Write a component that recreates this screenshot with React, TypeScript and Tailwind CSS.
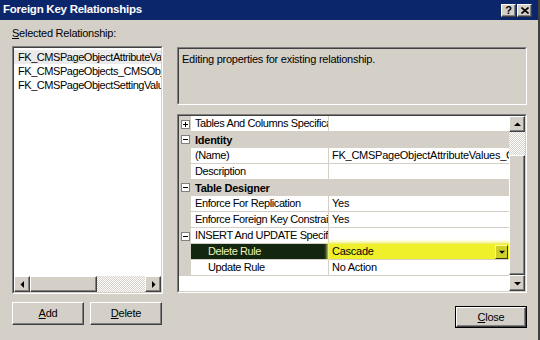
import React from "react";

const FONT = "font-['Liberation_Sans',Arial,sans-serif] text-[11px] tracking-[-0.25px]";

type Row = {
	name: string;
	value?: string;
	cat?: boolean;
	expand?: "+" | "-";
	indent?: boolean;
	selected?: boolean;
};

const ROWS: Row[] = [
	{ name: "Tables And Columns Specification", value: "", expand: "+" },
	{ name: "Identity", cat: true, expand: "-" },
	{ name: "(Name)", value: "FK_CMSPageObjectAttributeValues_CMSObjects" },
	{ name: "Description", value: "" },
	{ name: "Table Designer", cat: true, expand: "-" },
	{ name: "Enforce For Replication", value: "Yes" },
	{ name: "Enforce Foreign Key Constraint", value: "Yes" },
	{ name: "INSERT And UPDATE Specification", value: "", expand: "-" },
	{ name: "Delete Rule", value: "Cascade", indent: true, selected: true },
	{ name: "Update Rule", value: "No Action", indent: true },
];

const Arrow = ({ dir, size = 7 }: { dir: "up" | "down" | "left" | "right"; size?: number }) => {
	const pts = {
		up: "0,5 7,5 3.5,1.5",
		down: "0,2 7,2 3.5,5.5",
		left: "5,0 5,7 1.5,3.5",
		right: "2,0 2,7 5.5,3.5",
	}[dir];
	return (
		<svg width={size} height={size} viewBox="0 0 7 7">
			<polygon points={pts} fill="#000" />
		</svg>
	);
};

const Raised = ({ className = "", children }: { className?: string; children?: React.ReactNode }) => (
	<div
		className={`border border-t-white border-l-white border-r-[#404040] border-b-[#404040] bg-[#d4d0c8] shadow-[inset_-1px_-1px_0_#808080] flex items-center justify-center ${className}`}
	>
		{children}
	</div>
);

const Sunken = ({ className = "", inner = "", children }: { className?: string; inner?: string; children?: React.ReactNode }) => (
	<div className={`border border-t-[#808080] border-l-[#808080] border-r-white border-b-white ${className}`}>
		<div className={`h-full w-full border border-t-[#404040] border-l-[#404040] border-r-[#d4d0c8] border-b-[#d4d0c8] ${inner}`}>
			{children}
		</div>
	</div>
);

const Dither = ({ className = "" }: { className?: string }) => (
	<div className={`bg-[repeating-conic-gradient(#ffffff_0_25%,#d4d0c8_0_50%)] bg-[length:2px_2px] ${className}`} />
);

const ExpandBox = ({ sign }: { sign: "+" | "-" }) => (
	<div className="w-[9px] h-[9px] border border-[#808080] bg-white relative">
		<div className="absolute left-[1px] top-[3px] w-[5px] h-[1px] bg-black" />
		{sign === "+" && <div className="absolute left-[3px] top-[1px] w-[1px] h-[5px] bg-black" />}
	</div>
);

const Button = ({ label, u, className = "" }: { label: string; u: number; className?: string }) => (
	<Raised className={`h-[23px] w-[72px] ${className}`}>
		<span>
			{label.slice(0, u)}
			<span className="underline">{label[u]}</span>
			{label.slice(u + 1)}
		</span>
	</Raised>
);

const PropertyRow = ({ row }: { row: Row }) => {
	if (row.cat) {
		return (
			<div className="flex h-[16px] bg-[#d4d0c8] border-b border-[#d4d0c8]">
				<div className="w-[12px] flex items-center justify-center">
					{row.expand && <ExpandBox sign={row.expand} />}
				</div>
				<div className="pl-[4px] font-bold leading-[16px] whitespace-nowrap">{row.name}</div>
			</div>
		);
	}
	return (
		<div className="flex h-[16px]">
			<div className="w-[12px] shrink-0 bg-[#d4d0c8] flex items-center justify-center">
				{row.expand && <ExpandBox sign={row.expand} />}
			</div>
			<div
				className={`w-[138px] shrink-0 overflow-hidden whitespace-nowrap leading-[15px] tracking-[-0.4px] border-r border-b border-[#d4d0c8] ${
					row.indent ? "pl-[17px]" : "pl-[4px]"
				} ${row.selected ? "bg-[#13260f] text-[#f2f2b4]" : "bg-white"}`}
			>
				{row.name}
			</div>
			<div
				className={`flex-1 min-w-0 flex items-center overflow-hidden whitespace-nowrap leading-[15px] border-b border-[#d4d0c8] ${
					row.selected ? "bg-[#f0f02a] shadow-[0_0_3px_2px_#f3f36a]" : "bg-white"
				}`}
			>
				<span className="pl-[3px] flex-1 overflow-hidden">{row.value}</span>
				{row.selected && (
					<div className="w-[13px] h-[14px] mr-[1px] border border-t-[#ffff9a] border-l-[#ffff9a] border-r-[#3a3a08] border-b-[#3a3a08] bg-[#cfcf2a] flex items-center justify-center">
						<Arrow dir="down" size={6} />
					</div>
				)}
			</div>
		</div>
	);
};

export default function App() {
	return (
		<div className={`w-[540px] h-[340px] bg-[#d4d0c8] text-black flex flex-col border-r-2 border-r-[#404040] overflow-hidden ${FONT}`}>
			{/* title bar */}
			<div className="h-[20px] bg-[#0c266c] flex items-center pl-[3px] pr-[6px] shrink-0">
				<span className="text-white font-bold flex-1 text-[11.5px]">Foreign Key Relationships</span>
				<div className="flex gap-[1px]">
					<Raised className="w-[15px] h-[13px]">
						<span className="font-bold text-[11px] leading-none">?</span>
					</Raised>
					<Raised className="w-[15px] h-[13px]">
						<svg width="8" height="7" viewBox="0 0 8 7">
							<path d="M0.5 0.5 L7.5 6.5 M7.5 0.5 L0.5 6.5" stroke="#000" strokeWidth="1.6" />
						</svg>
					</Raised>
				</div>
			</div>

			<div className="flex flex-1">
				{/* left column */}
				<div className="ml-[12px] w-[151px] flex flex-col pt-[7px]">
					<div className="h-[13px] leading-[13px]">
						<span className="underline">S</span>elected Relationship:
					</div>
					<Sunken className="mt-[6px] h-[248px]" inner="bg-white flex flex-col">
						<div className="flex-1 pt-[2px] overflow-hidden tracking-[-0.45px]">
							{[
								"FK_CMSPageObjectAttributeValues_CMSObjects",
								"FK_CMSPageObjects_CMSObjects",
								"FK_CMSPageObjectSettingValues_CMSObjects",
							].map((t, i) => (
								<div
									key={t}
									className={`h-[14px] leading-[14px] pl-[4px] whitespace-nowrap ${i === 0 ? "bg-[#ebebeb]" : ""}`}
								>
									{t}
								</div>
							))}
						</div>
						<div className="h-[16px] flex">
							<Raised className="w-[16px] h-[16px]">
								<Arrow dir="left" />
							</Raised>
							<Raised className="w-[67px] h-[16px]" />
							<Dither className="flex-1 h-[16px]" />
							<Raised className="w-[16px] h-[16px]">
								<Arrow dir="right" />
							</Raised>
						</div>
					</Sunken>
					<div className="mt-[8px] flex gap-[6px]">
						<Button label="Add" u={0} />
						<Button label="Delete" u={0} />
					</div>
				</div>

				{/* right column */}
				<div className="ml-[14px] w-[350px] flex flex-col">
					<Sunken className="mt-[27px] h-[58px]" inner="pl-[3px] pt-[2px]">
						Editing properties for existing relationship.
					</Sunken>
					<Sunken className="mt-[9px] h-[179px]" inner="bg-white flex">
						<div className="flex-1 min-w-0 flex flex-col">
							{ROWS.map((r) => (
								<PropertyRow key={r.name} row={r} />
							))}
						</div>
						<div className="w-[16px] flex flex-col">
							<Raised className="h-[16px]">
								<Arrow dir="up" />
							</Raised>
							<Dither className="h-[23px]" />
							<Raised className="flex-1" />
							<Raised className="h-[16px]">
								<Arrow dir="down" />
							</Raised>
						</div>
					</Sunken>
					<div className="mt-[13px] flex justify-end">
						<div className="border border-black">
							<Raised className="h-[20px] w-[70px]">
								<span>
									<span className="underline">C</span>lose
								</span>
							</Raised>
						</div>
					</div>
				</div>
			</div>
		</div>
	);
}
